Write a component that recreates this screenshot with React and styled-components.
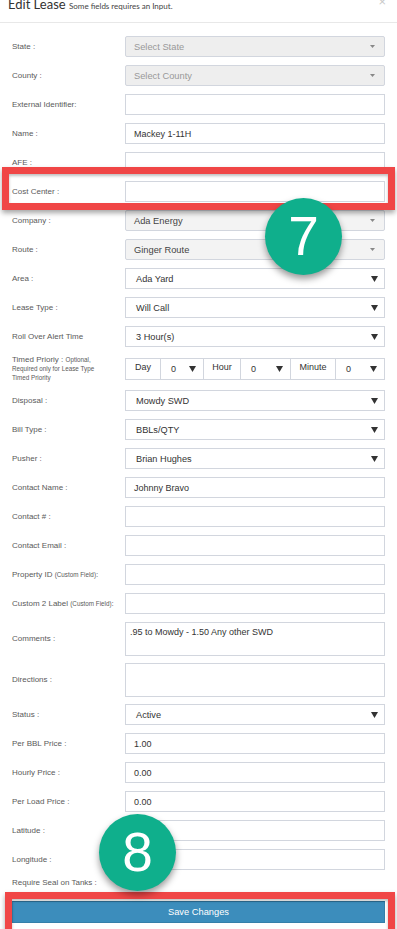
import React from "react";
import styled, { createGlobalStyle } from "styled-components";

const Global = createGlobalStyle`
  html, body { margin: 0; padding: 0; background: #fff; }
  body { font-family: "Liberation Sans", Arial, sans-serif; }
  * { box-sizing: border-box; }
`;

const Modal = styled.div`
  position: relative;
  width: 397px;
  height: 929px;
  overflow: hidden;
  background: #fff;
`;

const Header = styled.div`
  height: 23px;
  border-bottom: 1px solid #e8e8e8;
  padding: 0 8px;
  display: flex;
  align-items: flex-start;
`;

const Title = styled.div`
  font-family: Lato, "Open Sans", sans-serif;
  font-size: 13px;
  line-height: 13px;
  margin-top: -2px;
  color: #333;
  white-space: nowrap;
`;

const Sub = styled.span`
  font-size: 8px;
  color: #444;
`;

const Close = styled.div`
  margin-left: auto;
  margin-top: -5px;
  font-size: 13px;
  line-height: 13px;
  color: #c8c8c8;
  padding-right: 3px;
`;

const Body = styled.div`
  padding: 13px 12px 0 12px;
`;

const Row = styled.div`
  display: grid;
  grid-template-columns: 113px 260px;
  align-items: center;
  margin-bottom: ${(p) => p.$gap ?? 8}px;
`;

const Label = styled.div`
  font-size: 8px;
  line-height: ${(p) => p.$lh ?? 10}px;
  color: #5a5a5a;
  white-space: nowrap;
`;

const Small = styled.span`
  font-size: 6.3px;
`;

const Input = styled.div`
  height: ${(p) => p.$h ?? 21}px;
  border: 1px solid #d2d6de;
  background: #fff;
  padding: ${(p) => (p.$area ? "4px 4px" : "0 8px")};
  font-size: 9px;
  color: #333;
  display: flex;
  align-items: ${(p) => (p.$area ? "flex-start" : "center")};
`;

const Select = styled.div`
  height: 21px;
  border: 1px solid #d2d6de;
  background: #fff;
  padding: 0 6px 0 10px;
  font-size: 9.2px;
  color: #333;
  display: flex;
  align-items: center;
  justify-content: space-between;
`;

const Select2 = styled.div`
  height: 21px;
  border: 1px solid #d2d6de;
  border-radius: 2px;
  background: ${(p) => (p.$disabled ? "#eeeeee" : "#f3f3f3")};
  padding: 0 9px 0 8px;
  font-size: 9.3px;
  color: ${(p) => (p.$disabled ? "#999" : "#444")};
  display: flex;
  align-items: center;
  justify-content: space-between;
`;

const Group = styled.div`
  display: flex;
  height: 22px;
`;

const Addon = styled.div`
  width: ${(p) => p.$w}px;
  border: 1px solid #d2d6de;
  margin-left: -1px;
  &:first-child { margin-left: 0; }
  font-size: 9px;
  color: #333;
  display: flex;
  align-items: center;
  justify-content: center;
  padding-bottom: 3px;
`;

const MiniSelect = styled.div`
  width: ${(p) => p.$w}px;
  border: 1px solid #d2d6de;
  margin-left: -1px;
  font-size: 9px;
  color: #333;
  display: flex;
  align-items: center;
  justify-content: space-between;
  padding: 0 7px 0 10px;
`;

const SaveButton = styled.button`
  display: block;
  width: 373px;
  height: 22px;
  margin-top: 13px;
  background: #3c8dbc;
  border: 1px solid #367fa9;
  border-top-color: #2c6d93;
  color: #fff;
  font-family: "Liberation Sans", Arial, sans-serif;
  font-size: 9.3px;
  padding: 0;
`;

const SealLabel = styled(Label)`
  margin-top: 8px;
`;

const RedBox = styled.div`
  position: absolute;
  left: ${(p) => p.$x}px;
  top: ${(p) => p.$y}px;
  width: ${(p) => p.$w}px;
  height: ${(p) => p.$h}px;
  border: 7px solid #f04646;
  box-shadow: 0 3px 5px rgba(0, 0, 0, 0.35), inset 0 2px 3px rgba(0, 0, 0, 0.25);
  pointer-events: none;
`;

const Badge = styled.div`
  position: absolute;
  left: ${(p) => p.$x}px;
  top: ${(p) => p.$y}px;
  width: 77px;
  height: 77px;
  border-radius: 50%;
  background: #0faf8c;
  box-shadow: 0 4px 7px rgba(0, 0, 0, 0.4);
  color: #fff;
  font-family: "Liberation Sans", Arial, sans-serif;
  font-size: 55px;
  line-height: 77px;
  text-align: center;
`;

const Tri = () => (
  <svg width="7" height="6" viewBox="0 0 7 6">
    <path d="M0 0 H7 L3.5 6 Z" fill="#333" />
  </svg>
);

const Caret = () => (
  <svg width="5" height="3" viewBox="0 0 5 3">
    <path d="M0 0 H5 L2.5 3 Z" fill="#888" />
  </svg>
);

const TextRow = ({ label, value, h, area, gap }) => (
  <Row $gap={gap}>
    <Label>{label}</Label>
    <Input $h={h} $area={area}>{value}</Input>
  </Row>
);

const SelectRow = ({ label, value }) => (
  <Row>
    <Label>{label}</Label>
    <Select>
      <span>{value}</span>
      <Tri />
    </Select>
  </Row>
);

const Select2Row = ({ label, value, disabled }) => (
  <Row>
    <Label>{label}</Label>
    <Select2 $disabled={disabled}>
      <span>{value}</span>
      <Caret />
    </Select2>
  </Row>
);

export default function App() {
  return (
    <Modal>
      <Global />
      <Header>
        <Title>
          Edit Lease <Sub>Some fields requires an Input.</Sub>
        </Title>
        <Close>×</Close>
      </Header>
      <Body>
        <Select2Row label="State :" value="Select State" disabled />
        <Select2Row label="County :" value="Select County" disabled />
        <TextRow label="External Identifier:" />
        <TextRow label="Name :" value="Mackey 1-11H" />
        <TextRow label="AFE :" />
        <TextRow label="Cost Center :" />
        <Select2Row label="Company :" value="Ada Energy" />
        <Select2Row label="Route :" value="Ginger Route" />
        <SelectRow label="Area :" value="Ada Yard" />
        <SelectRow label="Lease Type :" value="Will Call" />
        <SelectRow label="Roll Over Alert Time" value="3 Hour(s)" />
        <Row>
          <Label $lh={9}>
            Timed Prioriy : <Small>Optional,</Small>
            <br />
            <Small>Required only for Lease Type</Small>
            <br />
            <Small>Timed Priority</Small>
          </Label>
          <Group>
            <Addon $w={36}>Day</Addon>
            <MiniSelect $w={44}>
              <span>0</span>
              <Tri />
            </MiniSelect>
            <Addon $w={38}>Hour</Addon>
            <MiniSelect $w={51}>
              <span>0</span>
              <Tri />
            </MiniSelect>
            <Addon $w={46}>Minute</Addon>
            <MiniSelect $w={50}>
              <span>0</span>
              <Tri />
            </MiniSelect>
          </Group>
        </Row>
        <SelectRow label="Disposal :" value="Mowdy SWD" />
        <SelectRow label="Bill Type :" value="BBLs/QTY" />
        <SelectRow label="Pusher :" value="Brian Hughes" />
        <TextRow label="Contact Name :" value="Johnny Bravo" />
        <TextRow label="Contact # :" />
        <TextRow label="Contact Email :" />
        <TextRow
          label={
            <>
              Property ID <Small>(Custom Field)</Small>:
            </>
          }
        />
        <TextRow
          label={
            <>
              Custom 2 Label <Small>(Custom Field)</Small>:
            </>
          }
        />
        <TextRow
          label="Comments :"
          value=".95 to Mowdy - 1.50 Any other SWD"
          h={34}
          area
          gap={7}
        />
        <TextRow label="Directions :" h={34} area gap={7} />
        <SelectRow label="Status :" value="Active" />
        <TextRow label="Per BBL Price :" value="1.00" />
        <TextRow label="Hourly Price :" value="0.00" />
        <TextRow label="Per Load Price :" value="0.00" />
        <TextRow label="Latitude :" />
        <TextRow label="Longitude :" gap={0} />
        <SealLabel>Require Seal on Tanks :</SealLabel>
        <SaveButton>Save Changes</SaveButton>
      </Body>

      <RedBox $x={2} $y={167} $w={393} $h={43} />
      <RedBox $x={5} $y={892} $w={390} $h={60} />
      <Badge $x={265} $y={198}>7</Badge>
      <Badge $x={99} $y={814}>8</Badge>
    </Modal>
  );
}
